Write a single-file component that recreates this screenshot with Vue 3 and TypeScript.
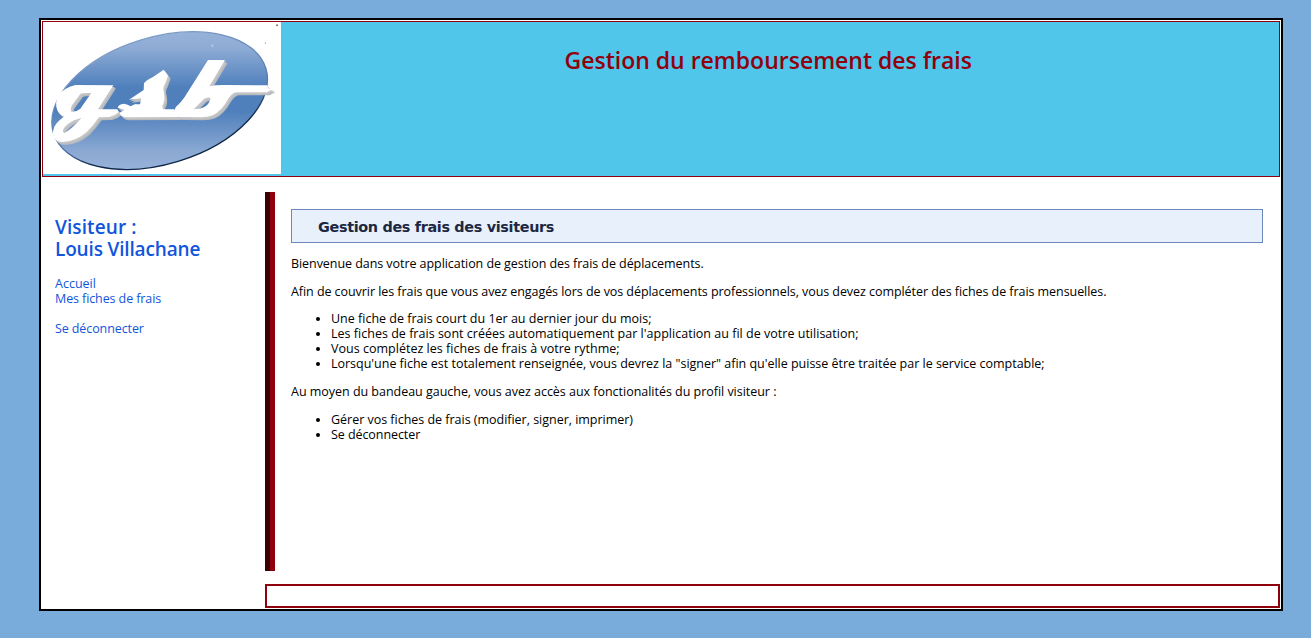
<script setup lang="ts">
interface Line {
  text: string
  cls: string
}

const rules: Line[] = [
  { text: 'Une fiche de frais court du 1er au dernier jour du mois;', cls: 'r1' },
  { text: "Les fiches de frais sont créées automatiquement par l'application au fil de votre utilisation;", cls: 'r2' },
  { text: 'Vous complétez les fiches de frais à votre rythme;', cls: 'r3' },
  {
    text: 'Lorsqu\'une fiche est totalement renseignée, vous devrez la "signer" afin qu\'elle puisse être traitée par le service comptable;',
    cls: 'r4',
  },
]

const features: Line[] = [
  { text: 'Gérer vos fiches de frais (modifier, signer, imprimer)', cls: 'f1' },
  { text: 'Se déconnecter', cls: 'f2' },
]
</script>

<template>
  <div class="page">
    <header class="banner">
      <svg class="logo" viewBox="39 36 714 456" preserveAspectRatio="none" role="img" aria-label="gsb">
        <defs>
          <linearGradient id="oval" gradientUnits="userSpaceOnUse" x1="389" y1="65" x2="389" y2="480" gradientTransform="rotate(16.9 389 272)">
            <stop offset="0" stop-color="#98b2d9" />
            <stop offset="0.12" stop-color="#8dabd5" />
            <stop offset="0.4" stop-color="#5080bc" />
            <stop offset="0.58" stop-color="#5080bc" />
            <stop offset="0.86" stop-color="#8aa8d3" />
            <stop offset="1" stop-color="#98b2d9" />
          </linearGradient>
          <linearGradient id="rim" gradientUnits="userSpaceOnUse" x1="330" y1="80" x2="460" y2="470" gradientTransform="rotate(16.9 389 272)">
            <stop offset="0" stop-color="#7f9dc6" />
            <stop offset="0.6" stop-color="#5279ae" />
            <stop offset="0.8" stop-color="#0f2748" />
          </linearGradient>
          <g id="script">
            <path
              fill-rule="evenodd"
              d="M250 226 L137 225 Q103 233 86 255 Q72 280 83 303 Q89 315 103 319 L86 333 Q67 351 69 374 Q73 395 97 396 Q139 394 171 365 Q190 347 207 322 L238 321 Q255 318 266 307 L262 298 L204 298 Z M151 252 Q158 248 184 249 L151 296 Q140 306 124 305 Q120 298 126 286 Z M132 331 L154 324 Q129 354 104 369 Q96 368 100 358 Q109 342 132 331 Z"
            />
            <path
              d="M401 179 L414 197 L405 222 Q397 233 402 249 Q407 270 397 288 L399 298 L432 298 L447 321 L292 322 Q274 322 268 309 L284 299 L263 293 Q265 282 282 281 Q293 283 302 289 L314 283 L330 283 L334 265 L297 269 L341 240 L342 220 Q350 209 369 201 Z"
            />
            <path
              fill-rule="evenodd"
              d="M534 150 L585 150 L538 229 Q558 224 587 225 L712 226 L714 235 L728 237 L711 247 L618 247 Q605 250 594 268 Q574 304 548 316 Q533 322 512 322 L452 321 Q430 320 431 305 L438 290 Q450 281 464 261 Z M542 263 Q525 260 515 274 L491 298 Q512 298 528 288 Q538 280 542 263 Z"
            />
          </g>
        </defs>
        <rect x="39" y="36" width="714" height="456" fill="#fff" />
        <ellipse
          cx="389"
          cy="272"
          rx="333"
          ry="190.500"
          transform="rotate(-16.9 389 272)"
          fill="url(#oval)"
          stroke="url(#rim)"
          stroke-width="4"
        />
        <use href="#script" x="8" y="9" fill="#b9babc" />
        <use href="#script" x="4" y="5" fill="#c4c5c7" />
        <use href="#script" fill="#fff" />
        <circle cx="547" cy="107" r="3.500" fill="#a9cbe7" />
        <circle cx="741" cy="46" r="3" fill="#777" />
        <circle cx="706" cy="99" r="2" fill="#999" />
      </svg>
      <h1><span>Gestion du remboursement des frais</span></h1>
    </header>

    <div class="columns">
      <nav class="menu">
        <h2><span class="m1">Visiteur :</span><br /><span class="m2">Louis Villachane</span></h2>
        <ul>
          <li><a class="a1">Accueil</a></li>
          <li><a class="a2">Mes fiches de frais</a></li>
          <li class="exit"><a class="a3">Se déconnecter</a></li>
        </ul>
      </nav>

      <div class="main">
        <main class="content">
          <h3><span>Gestion des frais des visiteurs</span></h3>
          <p><span class="p1">Bienvenue dans votre application de gestion des frais de déplacements.</span></p>
          <p><span class="p2">Afin de couvrir les frais que vous avez engagés lors de vos déplacements professionnels, vous devez compléter des fiches de frais mensuelles.</span></p>
          <ul>
            <li v-for="line in rules" :key="line.cls"><span :class="line.cls">{{ line.text }}</span></li>
          </ul>
          <p><span class="p3">Au moyen du bandeau gauche, vous avez accès aux fonctionalités du profil visiteur :</span></p>
          <ul>
            <li v-for="line in features" :key="line.cls"><span :class="line.cls">{{ line.text }}</span></li>
          </ul>
        </main>
        <footer class="foot"></footer>
      </div>
    </div>
  </div>
</template>

<style>
body {
  background: #79abdb;
}
</style>

<style scoped>
.page {
  box-sizing: border-box;
  width: 1244px;
  height: 593px;
  margin: 18px 0 0 39px;
  padding: 1px;
  border: 2px solid #000;
  background: #fff;
  color: #000;
  font: 12.5px/15px "Trebuchet MS", "Open Sans", sans-serif;
  white-space: nowrap;
}
.banner {
  box-sizing: border-box;
  display: flex;
  height: 156px;
  border: 1px solid #91000d;
  background: #4fc6ea;
}
.logo {
  width: 238px;
  height: 152px;
  flex: none;
}
h1 {
  margin: 23px 0 0 283.5px;
  color: #91000d;
  font-size: 23px;
  line-height: 30px;
  font-weight: 600;
}
.columns {
  display: flex;
  margin-top: 15px;
}
.menu {
  width: 210px;
  padding: 24px 0 0 13px;
  color: #1155dd;
}
h2 {
  margin: 0;
  font-size: 19px;
  line-height: 22px;
  font-weight: 600;
}
.m1 {
  letter-spacing: 0.1px;
}
.m2 {
  letter-spacing: -0.16px;
}
ul {
  margin: 0;
}
.menu ul {
  margin-top: 16px;
  padding: 0;
  list-style: none;
}
.a2,
.a3 {
  letter-spacing: -0.1px;
}
.exit {
  margin-top: 15px;
}
.main {
  width: 1015px;
}
.content {
  box-sizing: border-box;
  height: 379px;
  padding: 17px 17px 0 21px;
  border-left: 5px solid #3b0006;
  box-shadow: inset 5px 0 #91000d;
}
h3 {
  box-sizing: border-box;
  height: 34px;
  margin: 0;
  padding-left: 26px;
  border: 1px solid #6b88bf;
  background: #e8f0fc;
  color: #1c2841;
  font: bold 14.4px/34px Verdana, "DejaVu Sans", sans-serif;
  letter-spacing: -0.33px;
}
p {
  margin: 13px 0;
}
.p1 {
  letter-spacing: -0.06px;
}
.p2 {
  letter-spacing: -0.06px;
}
.p3 {
  letter-spacing: -0.025px;
}
.r2 {
  letter-spacing: 0.018px;
}
.r3 {
  letter-spacing: 0.02px;
}
.r4 {
  letter-spacing: -0.013px;
}
.f1 {
  letter-spacing: -0.02px;
}
.f2 {
  letter-spacing: -0.07px;
}
.content ul {
  margin: 12px 0 13px;
  padding-left: 40px;
}
.content p + ul {
  margin-top: -1px;
}
.content ul + p + ul {
  margin-top: 13px;
}
.foot {
  box-sizing: border-box;
  height: 24px;
  margin-top: 13px;
  border: 2px solid #91000d;
}
</style>
